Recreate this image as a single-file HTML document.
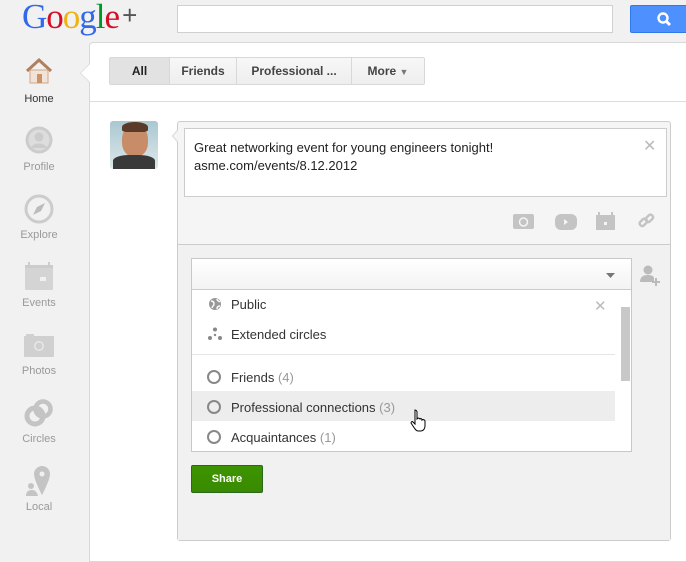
<!DOCTYPE html>
<html><head><style>
*{margin:0;padding:0;box-sizing:border-box}
body{width:686px;height:527px;overflow:hidden;background:#f1f1f1;font-family:"Liberation Sans",Arial,sans-serif;position:relative;font-size:13px;color:#222}
.abs{position:absolute}
.logo{left:22px;top:-3px;font-family:"Liberation Serif",serif;font-size:35px;letter-spacing:-1px}
.search{left:177px;top:5px;width:436px;height:28px;background:#fff;border:1px solid #d0d0d0}
.sbtn{left:630px;top:5px;width:60px;height:28px;background:#4d90fe;border:1px solid #3079ed;border-radius:2px}
.panel{left:89px;top:42px;width:600px;height:520px;background:#fff;border:1px solid #d8d8d8;border-radius:4px 0 0 0}
.nav{left:0;width:78px;text-align:center;font-size:11px;color:#999}
.tabs{left:109px;top:57px;height:28px;display:flex;border:1px solid #d8d8d8;border-radius:2px;background:linear-gradient(#f7f7f7,#eee)}
.tabs div{font-weight:bold;font-size:12px;color:#444;line-height:26px;text-align:center;border-left:1px solid #d8d8d8}
.tabs div:first-child{border-left:none;background:#e2e2e2;color:#222}
.item{left:207px;font-size:13px;color:#333}
.cnt{color:#999}
.radio{position:absolute;left:207px;width:14px;height:14px;border:2px solid #888;border-radius:50%}
</style></head><body>
<div class="abs logo"><span style="color:#3369e8">G</span><span style="color:#d50f25">o</span><span style="color:#eeb211">o</span><span style="color:#3369e8">g</span><span style="color:#009925">l</span><span style="color:#d50f25">e</span><span style="color:#555;font-family:'Liberation Sans';font-size:26px;position:relative;top:-4px;margin-left:3px">+</span></div>
<div class="abs search"></div>
<div class="abs sbtn"><svg width="20" height="20" style="position:absolute;left:24px;top:4px" viewBox="0 0 20 20"><circle cx="8" cy="8" r="4.5" stroke="#fff" stroke-width="2.4" fill="none"/><path d="M11 11l4 4" stroke="#fff" stroke-width="3"/></svg></div>
<div class="abs panel"></div>
<div class="abs" style="left:80px;top:63px;width:0;height:0;border-top:10px solid transparent;border-bottom:10px solid transparent;border-right:10px solid #d8d8d8"></div>
<div class="abs" style="left:81px;top:63px;width:0;height:0;border-top:10px solid transparent;border-bottom:10px solid transparent;border-right:10px solid #fff"></div>
<div class="abs" style="left:90px;top:101px;width:596px;height:1px;background:#ddd"></div>
<!-- nav -->
<svg class="abs" style="left:24px;top:57px" width="30" height="28" viewBox="0 0 30 28"><path d="M3 14L15 3l12 11" stroke="#b27f5c" stroke-width="3" fill="none"/><rect x="6" y="13" width="18" height="13" fill="#f2e3d6" stroke="#cfa88c"/><rect x="13" y="17" width="5" height="9" fill="#c9946c"/></svg>
<div class="abs nav" style="top:93px;color:#333">Home</div>
<svg class="abs" style="left:24px;top:125px" width="30" height="30"><circle cx="15" cy="15" r="13.5" fill="#ccc"/><circle cx="15" cy="15" r="10.5" fill="#ddd"/><circle cx="15" cy="12" r="4.5" fill="#ccc"/><path d="M7 23c2-6 14-6 16 0z" fill="#ccc"/></svg>
<div class="abs nav" style="top:161px">Profile</div>
<svg class="abs" style="left:24px;top:194px" width="30" height="30"><circle cx="15" cy="15" r="13" fill="none" stroke="#ccc" stroke-width="3"/><path d="M21 9l-4 8-8 4 4-8z" fill="#bbb"/></svg>
<div class="abs nav" style="top:229px">Explore</div>
<svg class="abs" style="left:24px;top:262px" width="30" height="30"><rect x="1" y="3" width="28" height="25" rx="1" fill="#d4d4d4"/><rect x="4" y="0" width="2" height="4" fill="#ccc"/><rect x="24" y="0" width="2" height="4" fill="#ccc"/><rect x="1" y="3" width="28" height="3" fill="#ccc"/><rect x="16" y="15" width="6" height="4" fill="#f1f1f1"/></svg>
<div class="abs nav" style="top:297px">Events</div>
<svg class="abs" style="left:23px;top:333px" width="32" height="25"><rect x="1" y="3" width="30" height="21" rx="1" fill="#d0d0d0"/><rect x="3" y="1" width="8" height="3" fill="#d0d0d0"/><circle cx="16" cy="13" r="5" fill="#e8e8e8"/><circle cx="16" cy="13" r="3.5" fill="#d0d0d0"/></svg>
<div class="abs nav" style="top:365px">Photos</div>
<svg class="abs" style="left:24px;top:398px" width="30" height="30"><circle cx="11" cy="18" r="8" fill="none" stroke="#c4c4c4" stroke-width="5"/><circle cx="19" cy="11" r="7.5" fill="none" stroke="#c4c4c4" stroke-width="4.5"/></svg>
<div class="abs nav" style="top:433px">Circles</div>
<svg class="abs" style="left:25px;top:465px" width="28" height="32"><path d="M17 1a8 8 0 018 8c0 6-8 21-8 21S9 15 9 9a8 8 0 018-8z" fill="#c4c4c4"/><circle cx="17" cy="9" r="2.5" fill="#f1f1f1"/><circle cx="6" cy="21" r="3" fill="#c4c4c4"/><path d="M1 31c0-5 3-6 6-6s5 2 6 6z" fill="#c4c4c4"/></svg>
<div class="abs nav" style="top:501px">Local</div>
<!-- tabs -->
<div class="abs tabs"><div style="width:59px">All</div><div style="width:67px">Friends</div><div style="width:115px">Professional ...</div><div style="width:73px">More <span style="font-size:9px;color:#777">▼</span></div></div>
<!-- avatar -->
<div class="abs" style="left:110px;top:121px;width:48px;height:48px;border-radius:3px;background:linear-gradient(#a9c8d2,#dfe8ea)"></div>
<div class="abs" style="left:122px;top:125px;width:26px;height:32px;border-radius:45%;background:#c98c68"></div>
<div class="abs" style="left:122px;top:122px;width:26px;height:10px;border-radius:50% 50% 20% 20%;background:#5a3a28"></div>
<div class="abs" style="left:113px;top:155px;width:42px;height:14px;border-radius:40% 40% 0 0;background:#3a3a3a"></div>
<!-- share box -->
<div class="abs" style="left:177px;top:121px;width:494px;height:420px;background:#f5f5f5;border:1px solid #ccc;border-radius:3px"></div>
<div class="abs" style="left:172px;top:129px;width:0;height:0;border-top:7px solid transparent;border-bottom:7px solid transparent;border-right:6px solid #ccc"></div>
<div class="abs" style="left:173px;top:129px;width:0;height:0;border-top:7px solid transparent;border-bottom:7px solid transparent;border-right:6px solid #f5f5f5"></div>
<div class="abs" style="left:184px;top:128px;width:483px;height:69px;background:#fff;border:1px solid #ccc"></div>
<div class="abs" style="left:194px;top:139px;line-height:18px;font-size:13px;color:#222">Great networking event for young engineers tonight!<br>asme.com/events/8.12.2012</div>
<div class="abs" style="left:643px;top:136px;color:#bbb;font-size:16px">✕</div>
<svg class="abs" style="left:512px;top:211px" width="150" height="20"><rect x="1" y="3" width="21" height="15" rx="2" fill="#c4c4c4"/><circle cx="11.5" cy="11" r="4" fill="none" stroke="#f5f5f5" stroke-width="1.5"/><rect x="43" y="3" width="22" height="16" rx="6" fill="#c4c4c4"/><path d="M52 8l4 3-4 3z" fill="#f5f5f5"/><rect x="84" y="4" width="19" height="15" fill="#c4c4c4"/><rect x="86" y="1" width="2" height="4" fill="#c4c4c4"/><rect x="99" y="1" width="2" height="4" fill="#c4c4c4"/><rect x="92" y="11" width="3" height="3" fill="#f5f5f5"/><g stroke="#c4c4c4" stroke-width="2.5" fill="none"><rect x="127" y="9" width="8" height="5" rx="2" transform="rotate(-45 131 11)"/><rect x="133" y="5" width="8" height="5" rx="2" transform="rotate(-45 137 7)"/></g></svg>
<div class="abs" style="left:178px;top:244px;width:492px;height:296px;background:#f1f1f1;border-top:1px solid #ccc"></div>
<!-- dropdown -->
<div class="abs" style="left:191px;top:258px;width:441px;height:194px;background:#fff;border:1px solid #c8c8c8"></div>
<div class="abs" style="left:192px;top:259px;width:439px;height:31px;background:linear-gradient(#fff,#f3f3f3);border-bottom:1px solid #ccc"></div>
<svg class="abs" style="left:606px;top:273px" width="9" height="5"><path d="M0 0h9L4.5 5z" fill="#777"/></svg>
<svg class="abs" style="left:208px;top:297px" width="15" height="15"><circle cx="7" cy="7" r="6" fill="#999"/><path d="M3 4c2 0 3 1 3 3s-2 2-2 4M9 2c0 2 2 2 3 3M9 12c0-2 1-3 3-3" stroke="#fff" stroke-width="1.4" fill="none"/></svg>
<div class="abs item" style="left:231px;top:297px">Public</div>
<div class="abs" style="left:594px;top:297px;color:#bbb;font-size:15px">✕</div>
<svg class="abs" style="left:208px;top:327px" width="14" height="14"><circle cx="7" cy="2.5" r="2" fill="#888"/><circle cx="2" cy="11" r="2" fill="#888"/><circle cx="12" cy="11" r="2" fill="#888"/><circle cx="7" cy="8" r="1.2" fill="#888"/></svg>
<div class="abs item" style="left:231px;top:327px">Extended circles</div>
<div class="abs" style="left:192px;top:354px;width:423px;height:1px;background:#e5e5e5"></div>
<div class="abs" style="left:192px;top:391px;width:423px;height:30px;background:#ededed"></div>
<div class="radio" style="top:370px"></div><div class="abs item" style="left:231px;top:370px">Friends <span class="cnt">(4)</span></div>
<div class="radio" style="top:400px"></div><div class="abs item" style="left:231px;top:400px">Professional connections <span class="cnt">(3)</span></div>
<div class="radio" style="top:430px"></div><div class="abs item" style="left:231px;top:430px">Acquaintances <span class="cnt">(1)</span></div>
<div class="abs" style="left:621px;top:307px;width:9px;height:74px;background:#c8c8c8"></div>
<svg class="abs" style="left:410px;top:409px" width="20" height="24"><path d="M5 1c1 0 2 1 2 2v7l1-1c1 0 2 1 2 1 1-1 2 0 2 1 1-1 3 0 3 1v5c0 3-2 5-4 5H8c-2 0-3-2-5-5l-2-3c0-1 1-2 2-1l2 2V3c0-1 0-2 0-2z" fill="#fff" stroke="#000" stroke-width="1"/></svg>
<svg class="abs" style="left:639px;top:264px" width="22" height="24"><circle cx="9" cy="6" r="4.5" fill="#bbb"/><path d="M1 18c0-5 3-7 8-7s6 2 6 3v4z" fill="#bbb"/><path d="M17 14v8M13 18h8" stroke="#bbb" stroke-width="2"/></svg>
<div class="abs" style="left:191px;top:465px;width:72px;height:28px;background:linear-gradient(#3d9400,#398a00);border:1px solid #29691d;border-radius:2px;color:#fff;font-weight:bold;font-size:11px;text-align:center;line-height:26px">Share</div>
</body></html>
